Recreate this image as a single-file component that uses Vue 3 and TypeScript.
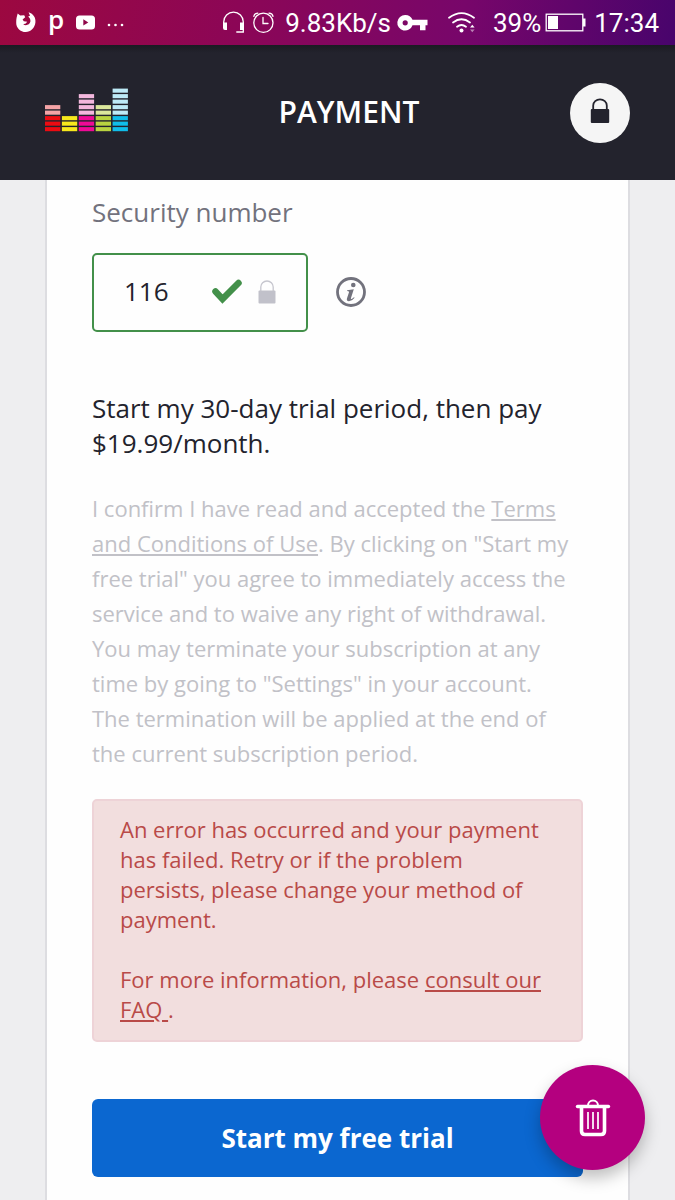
<script setup lang="ts">
import { ref } from 'vue'

interface LogoColumn {
  full: string
  light: string
  fullRows: number
  lightRows: number
}

const securityNumber = ref<string>('116')

const logoColumns: LogoColumn[] = [
  { full: '#ec0b12', light: '#f4a3a6', fullRows: 3, lightRows: 2 },
  { full: '#f7e81c', light: '#fbf4a0', fullRows: 3, lightRows: 0 },
  { full: '#ef0a96', light: '#f3b7dd', fullRows: 3, lightRows: 4 },
  { full: '#b9d340', light: '#dbe79c', fullRows: 3, lightRows: 2 },
  { full: '#10bdea', light: '#bdeaf7', fullRows: 3, lightRows: 5 },
]

const rowColor = (column: LogoColumn, row: number): string =>
  row <= column.fullRows ? column.full : column.light
</script>

<template>
  <div class="screen">
    <div class="status">
      <div class="status-left">
        <svg width="20" height="45" viewBox="0 0 20 45" aria-hidden="true">
          <path fill="#fff" d="M1.700 13.500 4.200 15.500 8.200 15.300 9.200 17.300 6.600 19.600 7.800 21.300 11.200 21.800 9.800 23.500 7.200 24.200C9.500 26.300 13.800 25 14.400 21.600 14.800 19 13.400 17.800 12.200 16.500L14 15.800 12.600 12.200C17.400 13.800 20 17.600 19.400 22.600 18.800 28.200 14.600 32 9.800 32 4.200 32 0 27.600.2 22.400.2 19 .8 16.600 1.700 13.500Z" />
        </svg>
        <span class="peel">p</span>
        <svg width="19" height="45" viewBox="0 0 19 45" aria-hidden="true">
          <rect y="15.500" width="19" height="14" rx="3.500" fill="#fff" />
          <path d="M7.300 19.200v6.400l5-3.200Z" fill="#8f0749" />
        </svg>
        <svg width="17" height="45" viewBox="0 0 17 45" fill="#fff" aria-hidden="true">
          <circle cx="2" cy="25" r="1.300" /><circle cx="8.500" cy="25" r="1.300" /><circle cx="15" cy="25" r="1.300" />
        </svg>
      </div>

      <div class="status-right">
        <svg width="26" height="45" viewBox="0 0 26 45" aria-hidden="true">
          <path d="M2.700 24v-2a9.800 9.800 0 0 1 19.600 0v10h-7" fill="none" stroke="#fff" stroke-width="1.300" />
          <path d="M2 22.500h4v7.500H4q-2 0-2-2ZM23 22.500h-4v7.500h4Z" fill="#fff" />
        </svg>
        <svg width="30" height="45" viewBox="0 0 30 45" fill="none" stroke="#fff" stroke-width="1.300" stroke-linecap="round" aria-hidden="true">
          <circle cx="12.400" cy="22.800" r="9.600" />
          <path d="M12 17.500v6h5M2.800 16.300q.5-3 4-3.200M22 16.300q-.5-3-4-3.200" />
        </svg>
        <span>9.83Kb/s</span>
        <svg width="45" height="45" viewBox="-2 0 45 45" aria-hidden="true">
          <path fill="#fff" fill-rule="evenodd" d="M8.200 15a7.800 7.800 0 0 1 7.300 4.800H30.500v5.500H28.500v5h-5.500v-5h-7.500A7.800 7.800 0 1 1 8.200 15Zm0 5.200a2.600 2.600 0 1 0 0 5.200a2.600 2.600 0 0 0 0-5.200Z" />
        </svg>
        <svg width="45" height="45" viewBox="0 0 45 45" aria-hidden="true">
          <g fill="none" stroke="#fff" stroke-width="1.800" stroke-linecap="round">
            <path d="M5 17.800q12.500-9.500 25 0M9 22.500q8.500-6.500 17 0M13 26.800q4.500-3.600 9 0" />
          </g>
          <circle cx="17.500" cy="30.500" r="2" fill="#fff" />
          <path d="M26 27.500l2.300-2.700 2.300 2.700Z" fill="#fff" />
          <path d="M26 29.500l2.300 2.700 2.300-2.700Z" fill="#fff" opacity=".5" />
        </svg>
        <span>39%</span>
        <svg width="45" height="45" viewBox="0 0 45 45" aria-hidden="true">
          <rect x="1.200" y="14.200" width="36.600" height="16.600" fill="none" stroke="#fff" stroke-width="1.300" />
          <path d="M3 16h10v13H3ZM38 18.500h2.500v8H38Z" fill="#fff" />
        </svg>
        <span>17:34</span>
      </div>
    </div>

    <header class="header">
      <svg class="logo" width="83" height="52" viewBox="0 0 83 52" role="img" aria-label="Deezer">
        <g v-for="(column, c) in logoColumns" :key="c">
          <rect
            v-for="row in column.fullRows + column.lightRows"
            :key="row"
            :x="c * 16.9"
            :y="45.6 - row * 5.5"
            width="15.3"
            height="4.1"
            :fill="rowColor(column, row)"
          />
        </g>
      </svg>
      <h1 class="title">PAYMENT</h1>
      <button class="secure" type="button" aria-label="Secure payment">
        <svg width="20" height="26" viewBox="0 0 20 26" aria-hidden="true">
          <path d="M3.200 12V7.500a6.800 6.200 0 0 1 13.600 0V12" fill="none" stroke="#23232d" stroke-width="1.800" />
          <rect x=".8" y="11" width="18.400" height="14" rx="1" fill="#23232d" />
        </svg>
      </button>
    </header>

    <main class="card">
      <label class="label" for="security">Security number</label>
      <div class="row">
        <div class="field">
          <input id="security" v-model="securityNumber" type="text" inputmode="numeric" />
          <svg width="32" height="26" viewBox="0 0 32 26" aria-hidden="true">
            <path d="M3.500 12.500 10.500 20 26.500 4" fill="none" stroke="#43904a" stroke-width="6.500" stroke-linecap="round" />
          </svg>
          <svg width="18" height="24" viewBox="0 0 18 24" aria-hidden="true">
            <path d="M2.800 11V7a6.200 6 0 0 1 12.400 0v4" fill="none" stroke="#c6c6ce" stroke-width="1.300" />
            <rect x=".5" y="10.500" width="17" height="13" rx="1" fill="#c1c1ca" />
          </svg>
        </div>
        <button class="info" type="button" aria-label="About the security number">
          <svg width="30" height="30" viewBox="0 0 30 30" fill="#72727d" aria-hidden="true">
            <circle cx="15" cy="15" r="13.500" fill="none" stroke="#72727d" stroke-width="2.800" />
            <circle cx="17.300" cy="8" r="2.300" />
            <path d="M11.200 13.200 17.800 12.200 14.900 21.300Q14.700 22.500 16 21.800L18 20.200 18.600 20.800Q16 24.300 13 24.300 10.200 24.200 11 21.300L13 15.200Q13.200 14.200 11 14.100Z" />
          </svg>
        </button>
      </div>

      <p class="offer">Start my 30-day trial period, then pay $19.99/month.</p>

      <p class="terms">
        I confirm I have read and accepted the <a href="#terms">Terms and Conditions of Use</a>. By clicking on
        "Start my free trial" you agree to immediately access the service and to waive any right of withdrawal. You
        may terminate your subscription at any time by going to "Settings" in your account. The termination will be
        applied at the end of the current subscription period.
      </p>

      <div class="alert" role="alert">
        <p>
          An error has occurred and your payment has failed. Retry or if the problem persists, please change your
          method of payment.
        </p>
        <p>For more information, please <a href="#faq">consult our FAQ </a>.</p>
      </div>

      <button class="submit" type="button">Start my free trial</button>
    </main>

    <button class="fab" type="button" aria-label="Delete">
      <svg width="36" height="40" viewBox="0 0 36 40" fill="none" stroke="#fff" aria-hidden="true">
        <path d="M2.500 8.500h31" stroke-width="3.400" stroke-linecap="round" />
        <path d="M13 7.500a5 5 0 0 1 10 0" stroke-width="2" />
        <path d="M6.500 9.500V33q0 3.500 3.500 3.500h16q3.500 0 3.500-3.500V9.500" stroke-width="3.600" />
        <path d="M13 14v17M18 14v17M23 14v17" stroke-width="1.700" />
      </svg>
    </button>
  </div>
</template>

<style>
body {
  margin: 0;
  background: #eeeef0;
}
</style>

<style scoped>
.screen {
  display: flex;
  flex-direction: column;
  min-height: 100vh;
  font-family: "Open Sans", "Noto Sans", sans-serif;
}

.screen * {
  box-sizing: border-box;
}

svg {
  flex: none;
}

button {
  padding: 0;
  border: 0;
  font-family: inherit;
  cursor: pointer;
}

p {
  margin: 0;
}

.status {
  display: flex;
  align-items: center;
  justify-content: space-between;
  height: 45px;
  padding: 0 16px;
  background: linear-gradient(100deg, #9c0840 0%, #8c0656 35%, #78066a 68%, #48046c 100%);
  color: #fff;
  font: 26px/48px Roboto, sans-serif;
}

.status-left {
  display: flex;
  align-items: center;
  gap: 12px;
}

.peel {
  font: 600 26px/38px "Open Sans", sans-serif;
  height: 45px;
}

.status-right {
  display: flex;
  align-items: center;
  gap: 4px;
}

.header {
  display: flex;
  align-items: center;
  justify-content: space-between;
  height: 135px;
  padding: 0 45px;
  background: linear-gradient(#1a1b22, #23232d 8px);
}

.title {
  margin: 0;
  padding-bottom: 2px;
  color: #fff;
  font-size: 30px;
  font-weight: 600;
  line-height: 36px;
}

.secure {
  display: flex;
  align-items: center;
  justify-content: center;
  width: 60px;
  height: 60px;
  padding-bottom: 4px;
  border-radius: 50%;
  background: #f5f5f5;
}

.card {
  display: flex;
  flex: 1;
  flex-direction: column;
  margin: 0 45px;
  padding: 14px 45px 23px;
  border: solid #dddde1;
  border-width: 0 2px;
  background: #fefefe;
}

.label {
  color: #72727d;
  font-size: 26px;
  line-height: 36px;
}

.row {
  display: flex;
  align-items: center;
  gap: 28px;
  margin-top: 23px;
}

.field {
  display: flex;
  align-items: center;
  width: 216px;
  height: 79px;
  padding: 0 30px 2px;
  border: 2px solid #43904a;
  border-radius: 5px;
}

.field input {
  flex: 1;
  min-width: 0;
  padding: 0 0 2px;
  border: 0;
  outline: 0;
  background: none;
  color: #23232d;
  font-family: inherit;
  font-size: 26px;
  line-height: 36px;
}

.field svg + svg {
  margin-left: 14px;
}

.info {
  display: flex;
  margin-bottom: 2px;
  border-radius: 50%;
  background: none;
}

.offer {
  margin-top: 59px;
  color: #23232d;
  font-size: 26px;
  line-height: 35px;
}

.terms {
  margin-top: 30px;
  padding-right: 12px;
  color: #c1c1c7;
  font-size: 22px;
  line-height: 35px;
}

a {
  color: inherit;
  text-decoration: underline;
}

.alert {
  display: grid;
  gap: 30px;
  margin-top: 28px;
  padding: 13px 32px 16px 26px;
  border: 2px solid #eed3d7;
  border-radius: 5px;
  background: #f2dede;
  color: #b94a48;
  font-size: 22px;
  line-height: 30px;
}

.submit {
  height: 78px;
  margin-top: 57px;
  border-radius: 6px;
  background: #0b67d0;
  color: #fff;
  font-size: 26px;
  font-weight: 700;
}

.fab {
  position: fixed;
  right: 30px;
  bottom: 30px;
  display: flex;
  align-items: center;
  justify-content: center;
  width: 105px;
  height: 105px;
  border-radius: 50%;
  background: #b4007f;
  box-shadow: 0 8px 16px rgba(0, 0, 0, 0.25);
}
</style>
